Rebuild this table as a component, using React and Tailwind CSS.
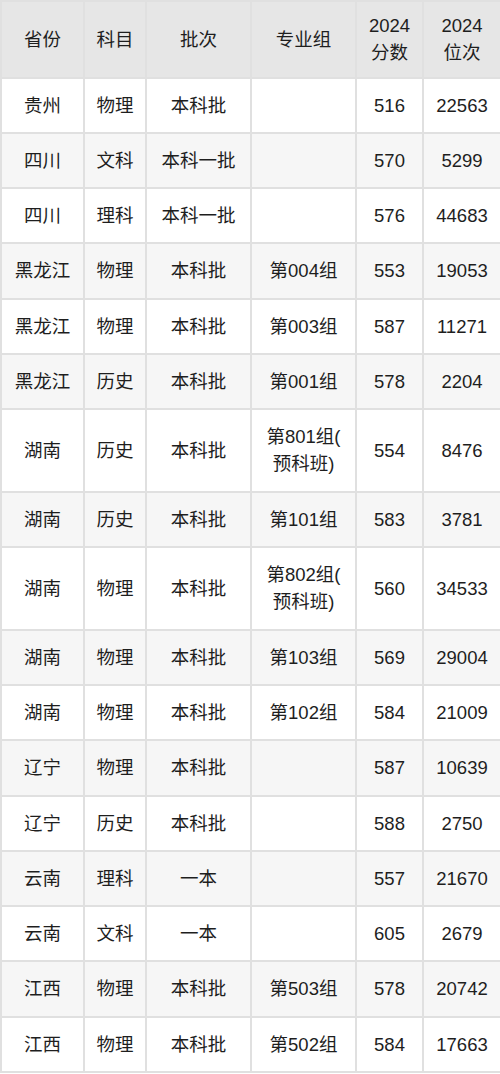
import React from "react";

const rows = [
  ["贵州", "物理", "本科批", "", "516", "22563"],
  ["四川", "文科", "本科一批", "", "570", "5299"],
  ["四川", "理科", "本科一批", "", "576", "44683"],
  ["黑龙江", "物理", "本科批", "第004组", "553", "19053"],
  ["黑龙江", "物理", "本科批", "第003组", "587", "11271"],
  ["黑龙江", "历史", "本科批", "第001组", "578", "2204"],
  ["湖南", "历史", "本科批", "第801组(\n预科班)", "554", "8476"],
  ["湖南", "历史", "本科批", "第101组", "583", "3781"],
  ["湖南", "物理", "本科批", "第802组(\n预科班)", "560", "34533"],
  ["湖南", "物理", "本科批", "第103组", "569", "29004"],
  ["湖南", "物理", "本科批", "第102组", "584", "21009"],
  ["辽宁", "物理", "本科批", "", "587", "10639"],
  ["辽宁", "历史", "本科批", "", "588", "2750"],
  ["云南", "理科", "一本", "", "557", "21670"],
  ["云南", "文科", "一本", "", "605", "2679"],
  ["江西", "物理", "本科批", "第503组", "578", "20742"],
  ["江西", "物理", "本科批", "第502组", "584", "17663"],
];

const headers = ["省份", "科目", "批次", "专业组", "2024\n分数", "2024\n位次"];
const widths = ["w-[83px]", "w-[62px]", "w-[105px]", "w-[105px]", "w-[67px]", "w-[78px]"];

const Cell = ({ text }) => (
  <td className="border-2 border-[#e0e0e0] px-1 text-center align-middle">
    {text.split("\n").map((t, i) => (
      <div key={i}>{t}</div>
    ))}
  </td>
);

export default function App() {
  return (
    <div
      className="w-[500px] bg-white text-[18.5px] leading-[27px] text-[#1e1e1e]"
      style={{ fontFamily: '"Liberation Sans", "Noto Sans CJK SC", sans-serif' }}
    >
      <table className="w-[500px] table-fixed border-collapse">
        <colgroup>
          {widths.map((w, i) => (
            <col key={i} className={w} />
          ))}
        </colgroup>
        <thead>
          <tr className="h-[76.5px] bg-[#e6e6e6]">
            {headers.map((h, i) => (
              <th key={i} className="border-2 border-[#e0e0e0] px-1 text-center align-middle font-normal">
                {h.split("\n").map((t, j) => (
                  <div key={j}>{t}</div>
                ))}
              </th>
            ))}
          </tr>
        </thead>
        <tbody>
          {rows.map((r, i) => (
            <tr
              key={i}
              className={
                (r[3].includes("\n") ? "h-[82.8px] " : "h-[55.25px] ") +
                (i % 2 === 1 ? "bg-[#f6f6f6]" : "bg-white")
              }
            >
              {r.map((c, j) => (
                <Cell key={j} text={c} />
              ))}
            </tr>
          ))}
        </tbody>
      </table>
    </div>
  );
}
